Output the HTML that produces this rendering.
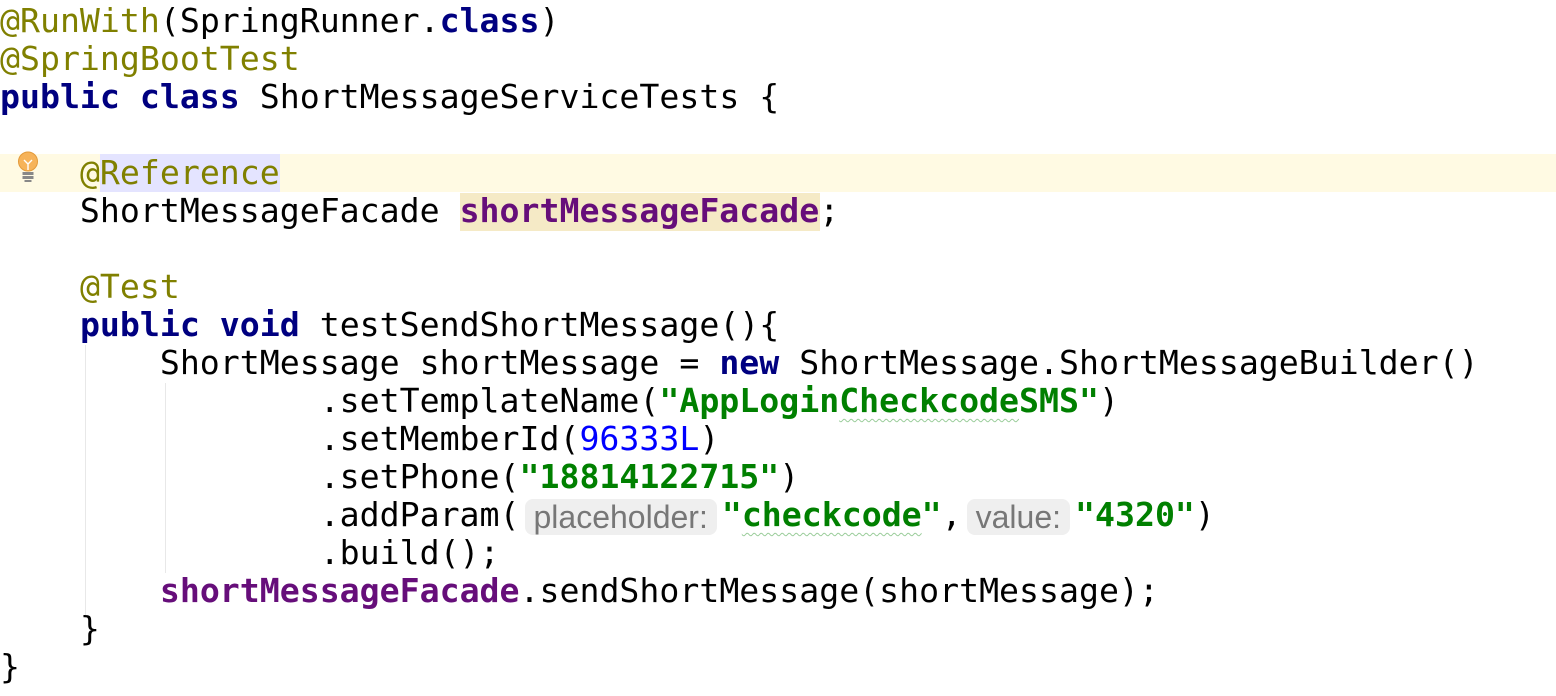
<!DOCTYPE html>
<html><head><meta charset="utf-8"><style>
html,body{margin:0;padding:0;background:#fff;width:1556px;height:696px;overflow:hidden}
.l{position:absolute;left:0;height:38px;line-height:38px;font-family:"DejaVu Sans Mono","Liberation Mono",monospace;font-size:33.2px;color:#000;white-space:pre}
.a{color:#808000}.k{color:#000080;font-weight:bold}.s{color:#008000;font-weight:bold}.n{color:#0000ff}.f{color:#660e7a;font-weight:bold}
.hint{display:inline-block;font-family:"Liberation Sans",sans-serif;font-size:32px;color:#777;background:#efefef;border-radius:8px;height:36px;line-height:36px;vertical-align:middle;padding:0 9px;margin:0 5px 0 5px}
.w{text-decoration:underline wavy #9c9;text-underline-offset:6px;text-decoration-thickness:1px}
.g{position:absolute;width:1px;background:#e8e8e8}
</style></head><body>
<div style="position:absolute;left:0;top:154px;width:1556px;height:38px;background:#fffae3"></div>
<div style="position:absolute;left:100px;top:154px;width:180px;height:38px;background:#e4e4ff"></div>
<div style="position:absolute;left:460px;top:193px;width:360px;height:38px;background:#f5eac6"></div>
<div class="g" style="left:85px;top:345px;height:270px"></div>
<div class="g" style="left:165px;top:383px;height:190px"></div>
<svg style="position:absolute;left:16px;top:151px" width="24" height="32" viewBox="0 0 24 32"><circle cx="12" cy="10.5" r="9.5" fill="#f6b35a" stroke="#e39a3a"/><path d="M8 9l4 4 4-4M12 13v6" stroke="#fff" stroke-width="1.4" fill="none"/><rect x="6.5" y="21" width="11" height="3" fill="#888"/><rect x="6.5" y="25" width="11" height="3" fill="#888"/><rect x="8.5" y="29" width="7" height="2" fill="#888"/></svg>
<div class="l" style="top:2px"><span class="a">@RunWith</span>(SpringRunner.<span class="k">class</span>)</div>
<div class="l" style="top:40px"><span class="a">@SpringBootTest</span></div>
<div class="l" style="top:78px"><span class="k">public class</span> ShortMessageServiceTests {</div>
<div class="l" style="top:154px">    <span class="a">@Reference</span></div>
<div class="l" style="top:192px">    ShortMessageFacade <span class="f">shortMessageFacade</span>;</div>
<div class="l" style="top:268px">    <span class="a">@Test</span></div>
<div class="l" style="top:306px">    <span class="k">public void</span> testSendShortMessage(){</div>
<div class="l" style="top:344px">        ShortMessage shortMessage = <span class="k">new</span> ShortMessage.ShortMessageBuilder()</div>
<div class="l" style="top:382px">                .setTemplateName(<span class="s">"AppLogin<span class="w">Checkcode</span>SMS"</span>)</div>
<div class="l" style="top:420px">                .setMemberId(<span class="n">96333L</span>)</div>
<div class="l" style="top:458px">                .setPhone(<span class="s">"18814122715"</span>)</div>
<div class="l" style="top:496px">                .addParam(<span class="hint">placeholder:</span><span class="s">"<span class="w">checkcode</span>"</span>,<span class="hint">value:</span><span class="s">"4320"</span>)</div>
<div class="l" style="top:534px">                .build();</div>
<div class="l" style="top:572px">        <span class="f">shortMessageFacade</span>.sendShortMessage(shortMessage);</div>
<div class="l" style="top:610px">    }</div>
<div class="l" style="top:648px">}</div>
</body></html>
